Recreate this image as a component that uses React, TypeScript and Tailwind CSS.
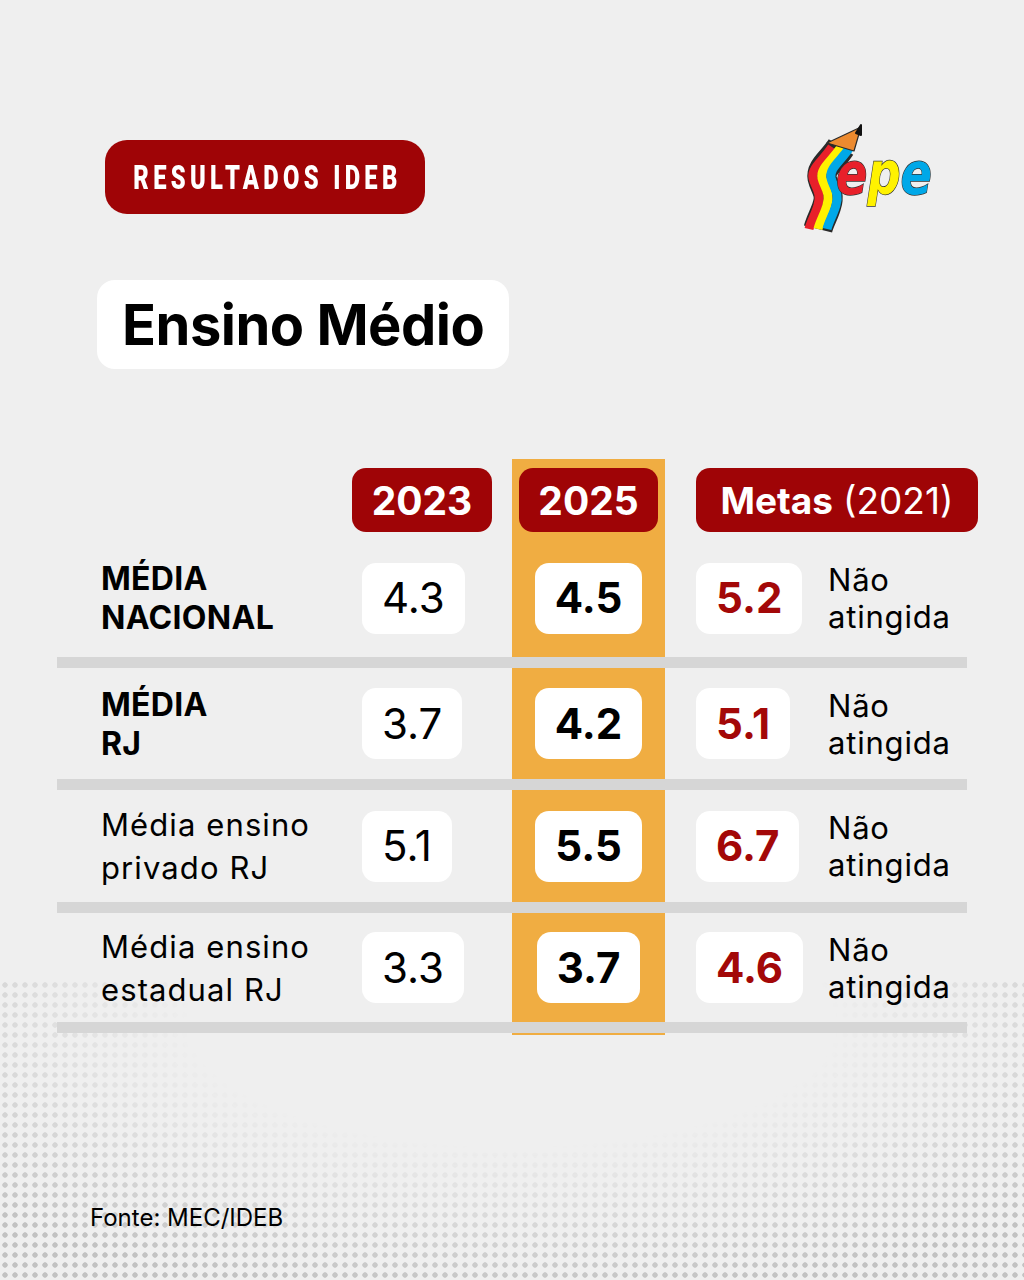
import React from 'react';

type Row = {
  label: string[];
  bold: boolean;
  y2023: string;
  y2025: string;
  meta: string;
  height: string;
};

const ROWS: Row[] = [
  { label: ['MÉDIA', 'NACIONAL'], bold: true, y2023: '4.3', y2025: '4.5', meta: '5.2', height: 'h-[118px]' },
  { label: ['MÉDIA', 'RJ'], bold: true, y2023: '3.7', y2025: '4.2', meta: '5.1', height: 'h-[111px]' },
  { label: ['Média ensino', 'privado RJ'], bold: false, y2023: '5.1', y2025: '5.5', meta: '6.7', height: 'h-[112px]' },
  { label: ['Média ensino', 'estadual RJ'], bold: false, y2023: '3.3', y2025: '3.7', meta: '4.6', height: 'h-[109px]' },
];

function SepeLogo() {
  const stripe = 'M41 26 C 32 40, 20 47, 22 57 C 24 66, 31 72, 27 84 C 25 92, 20 100, 18 108';
  return (
    <svg width="140" height="112" viewBox="0 0 140 112" className="block">
      {/* pencil body */}
      <path d={stripe} fill="none" stroke="#2a2a2a" strokeWidth="29" />
      <path d={stripe} fill="none" stroke="#e8202a" strokeWidth="9" transform="translate(-9 0)" />
      <path d={stripe} fill="none" stroke="#fff200" strokeWidth="9" />
      <path d={stripe} fill="none" stroke="#00a8e8" strokeWidth="9" transform="translate(9 0)" />
      {/* tip */}
      <polygon points="27,22 54,30 61,6" fill="#ec8a2f" stroke="#2a2a2a" strokeWidth="1.2" strokeLinejoin="round" />
      <polygon points="56,12 61,4 61,14" fill="#111" stroke="#111" strokeWidth="2" strokeLinejoin="round" />
      <text
        x="36"
        y="73"
        textLength="96"
        lengthAdjust="spacingAndGlyphs"
        fontFamily="'DejaVu Sans', sans-serif"
        fontStyle="italic"
        fontWeight="bold"
        fontSize="58"
        stroke="#333"
        strokeWidth="1.4"
        paintOrder="stroke"
      >
        <tspan fill="#e8202a">e</tspan>
        <tspan fill="#fff200">p</tspan>
        <tspan fill="#00a8e8">e</tspan>
      </text>
    </svg>
  );
}

function ValueBox({ value, variant }: { value: string; variant: 'plain' | 'bold' | 'red' }) {
  const tone =
    variant === 'plain'
      ? 'font-normal text-black'
      : variant === 'bold'
        ? 'font-bold text-black'
        : 'font-bold text-[#a30808]';
  return (
    <div className={`h-[71px] rounded-[14px] bg-white px-[20px] flex items-center text-[42px] leading-none ${tone}`}>
      {value}
    </div>
  );
}

export default function App() {
  return (
    <div className="relative w-[1024px] h-[1280px] overflow-hidden bg-[#efefef] font-['Inter',sans-serif] text-black">
      {/* halftone decoration */}
      <div className="absolute inset-x-0 bottom-0 h-[300px] pointer-events-none bg-[radial-gradient(circle,#bdbdbd_2.4px,transparent_3px)] bg-[length:10px_10px] [mask-image:radial-gradient(ellipse_70%_90%_at_50%_15%,transparent_45%,rgba(0,0,0,0.9)_100%)]" />

      <div className="relative pt-[121px]">
        {/* Header */}
        <div className="flex items-center justify-between pl-[105px] pr-[84px]">
          <div className="h-[74px] w-[320px] rounded-[22px] bg-[#9f0406] flex items-center justify-center overflow-hidden">
            <span className="inline-block whitespace-nowrap font-['Roboto',sans-serif] font-black text-white text-[33px] tracking-[6px] leading-none scale-x-[0.72] pl-[6px]">
              RESULTADOS IDEB
            </span>
          </div>
          <SepeLogo />
        </div>

        {/* Title */}
        <div className="ml-[97px] mt-[47px] inline-flex h-[89px] items-center rounded-[18px] bg-white px-[25px]">
          <h1 className="text-[56px] font-bold leading-none tracking-[-0.5px]">Ensino Médio</h1>
        </div>

        {/* Table */}
        <div className="ml-[57px] mt-[90px] w-[921px]">
          <div className="flex h-[80px]">
            <div className="w-[295px]" />
            <div className="w-[140px] pt-[9px]">
              <div className="h-[64px] rounded-[14px] bg-[#9f0406] flex items-center justify-center text-white font-bold text-[39px] leading-none">
                2023
              </div>
            </div>
            <div className="w-[20px]" />
            <div className="w-[153px] bg-[#f0ad42] pt-[9px] px-[7px]">
              <div className="h-[64px] rounded-[14px] bg-[#9f0406] flex items-center justify-center text-white font-bold text-[39px] leading-none">
                2025
              </div>
            </div>
            <div className="w-[31px]" />
            <div className="w-[282px] pt-[9px]">
              <div className="h-[64px] rounded-[14px] bg-[#9f0406] flex items-center justify-center gap-[10px] text-white text-[37px] leading-none">
                <span className="font-bold">Metas</span>
                <span className="font-normal">(2021)</span>
              </div>
            </div>
          </div>

          {ROWS.map((row, i) => (
            <div key={i}>
              <div className={`flex ${row.height}`}>
                <div className="w-[295px] pl-[44px] flex items-center">
                  {row.bold ? (
                    <div className="text-[32px] font-bold leading-[39px] tracking-[0.3px]">
                      {row.label.map((l) => (
                        <div key={l}>{l}</div>
                      ))}
                    </div>
                  ) : (
                    <div className="text-[31px] font-normal leading-[43px] tracking-[1.1px]">
                      {row.label.map((l) => (
                        <div key={l}>{l}</div>
                      ))}
                    </div>
                  )}
                </div>
                <div className="w-[140px] pl-[10px] flex items-center">
                  <ValueBox value={row.y2023} variant="plain" />
                </div>
                <div className="w-[20px]" />
                <div className="w-[153px] bg-[#f0ad42] flex items-center justify-center">
                  <ValueBox value={row.y2025} variant="bold" />
                </div>
                <div className="w-[31px]" />
                <div className="w-[282px] flex items-center">
                  <div className="w-[132px] flex">
                    <ValueBox value={row.meta} variant="red" />
                  </div>
                  <div className="text-[31px] leading-[37px] tracking-[0.8px]">
                    <div>Não</div>
                    <div>atingida</div>
                  </div>
                </div>
              </div>
              <div className="h-[11px] w-[910px] bg-[#d6d6d6]" />
            </div>
          ))}
          <div className="ml-[455px] h-[2px] w-[153px] bg-[#f0ad42]" />
        </div>

        <p className="ml-[90px] mt-[171px] text-[24px] leading-none tracking-[0px]">Fonte: MEC/IDEB</p>
      </div>
    </div>
  );
}
